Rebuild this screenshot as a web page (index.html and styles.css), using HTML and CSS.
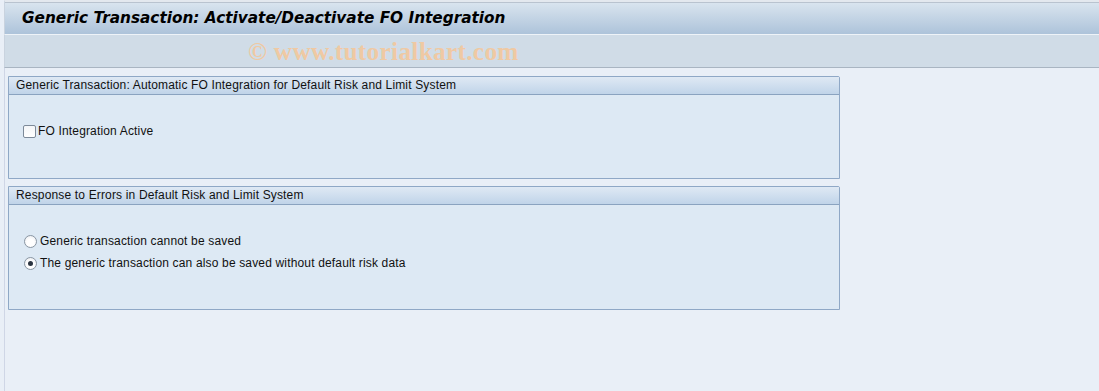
FILE: index.html
```html
<!DOCTYPE html>
<html>
<head>
  <meta charset="UTF-8">
  <title>Activate/Deactivate FO Integration</title>
  <link rel="stylesheet" href="styles.css">
</head>
<body>
  <div class="titlebar">
    <h1>Generic Transaction: Activate/Deactivate FO Integration</h1>
  </div>
  <div class="toolbar">
    <span class="watermark">© www.tutorialkart.com</span>
  </div>

  <div class="main">
    <section class="group">
      <div class="group-head">Generic Transaction: Automatic FO Integration for Default Risk and Limit System</div>
      <div class="group-body body-fo">
        <label class="field check-row">
          <span class="checkbox"></span>FO Integration Active
        </label>
      </div>
    </section>

    <section class="group">
      <div class="group-head">Response to Errors in Default Risk and Limit System</div>
      <div class="group-body body-errors">
        <label class="field radio-row">
          <span class="radio"></span>Generic transaction cannot be saved
        </label>
        <label class="field radio-row">
          <span class="radio checked"></span>The generic transaction can also be saved without default risk data
        </label>
      </div>
    </section>
  </div>
</body>
</html>
```

FILE: styles.css
```css
body {
  margin: 0;
  background: #e9eff7;
  font-family: "Liberation Sans", Arial, sans-serif;
  font-size: 12px;
  letter-spacing: 0.16px;
  color: #000;
  height: 391px;
  overflow: hidden;
}

/* title area */
.titlebar {
  margin-left: 4px;
  border-left: 1px solid #c9d3df;
  border-top: 2px solid #e3e8ee;
  box-shadow: inset 0 1px 0 #b9c3cf;
  height: 32px;
  background: linear-gradient(#dae5ef, #adc3da);
  border-bottom: 1px solid #eef3f8;
  display: flex;
  align-items: center;
  padding-left: 17px;
}

.titlebar h1 {
  margin: 0;
  font-family: "DejaVu Sans", Verdana, sans-serif;
  font-size: 15.3px;
  font-weight: bold;
  font-style: italic;
  letter-spacing: 0;
}

.toolbar {
  margin-left: 4px;
  border-left: 1px solid #c9d3df;
  height: 32px;
  background: #d0dce7;
  border-bottom: 1px solid #a9b5c2;
  display: flex;
  align-items: center;
  padding-left: 243px;
}

.watermark {
  font-family: "Liberation Serif", "Times New Roman", serif;
  font-weight: bold;
  font-size: 25.3px;
  color: #efc9a3;
  letter-spacing: 0.3px;
}

/* body with group boxes */
.main {
  margin-left: 4px;
  border-left: 1px solid #cfd6e6;
  padding: 8px 0 0 3px;
  height: 330px;
  display: flex;
  flex-direction: column;
  gap: 7px;
}

.group {
  width: 830px;
  border: 1px solid #8fa8c6;
  border-top-right-radius: 2px;
  background: #dde9f4;
}

.group-head {
  height: 17px;
  line-height: 17px;
  padding-left: 7px;
  background: linear-gradient(#dfe9f4, #c0d4e9);
  border-bottom: 1px solid #8aa3c0;
  color: #111;
}

.body-fo {
  height: 83px;
  padding: 29px 0 0 14px;
  box-sizing: border-box;
}

.body-errors {
  height: 104px;
  padding: 29px 0 0 15px;
  box-sizing: border-box;
  display: flex;
  flex-direction: column;
  gap: 8px;
}

.field {
  display: flex;
  align-items: center;
  height: 14px;
  color: #111;
}

.checkbox {
  width: 11px;
  height: 11px;
  border: 1px solid #7d8a99;
  border-radius: 2px;
  background: linear-gradient(#f4f6f8, #ffffff);
  margin-right: 2px;
}

.radio {
  width: 11px;
  height: 11px;
  border: 1px solid #8a96a3;
  border-radius: 50%;
  background: radial-gradient(circle at 50% 60%, #ffffff 40%, #e6e9ed);
  margin-right: 3px;
  position: relative;
}

.radio.checked::after {
  content: "";
  position: absolute;
  left: 3px;
  top: 3px;
  width: 5px;
  height: 5px;
  border-radius: 50%;
  background: #2b3440;
}
```
